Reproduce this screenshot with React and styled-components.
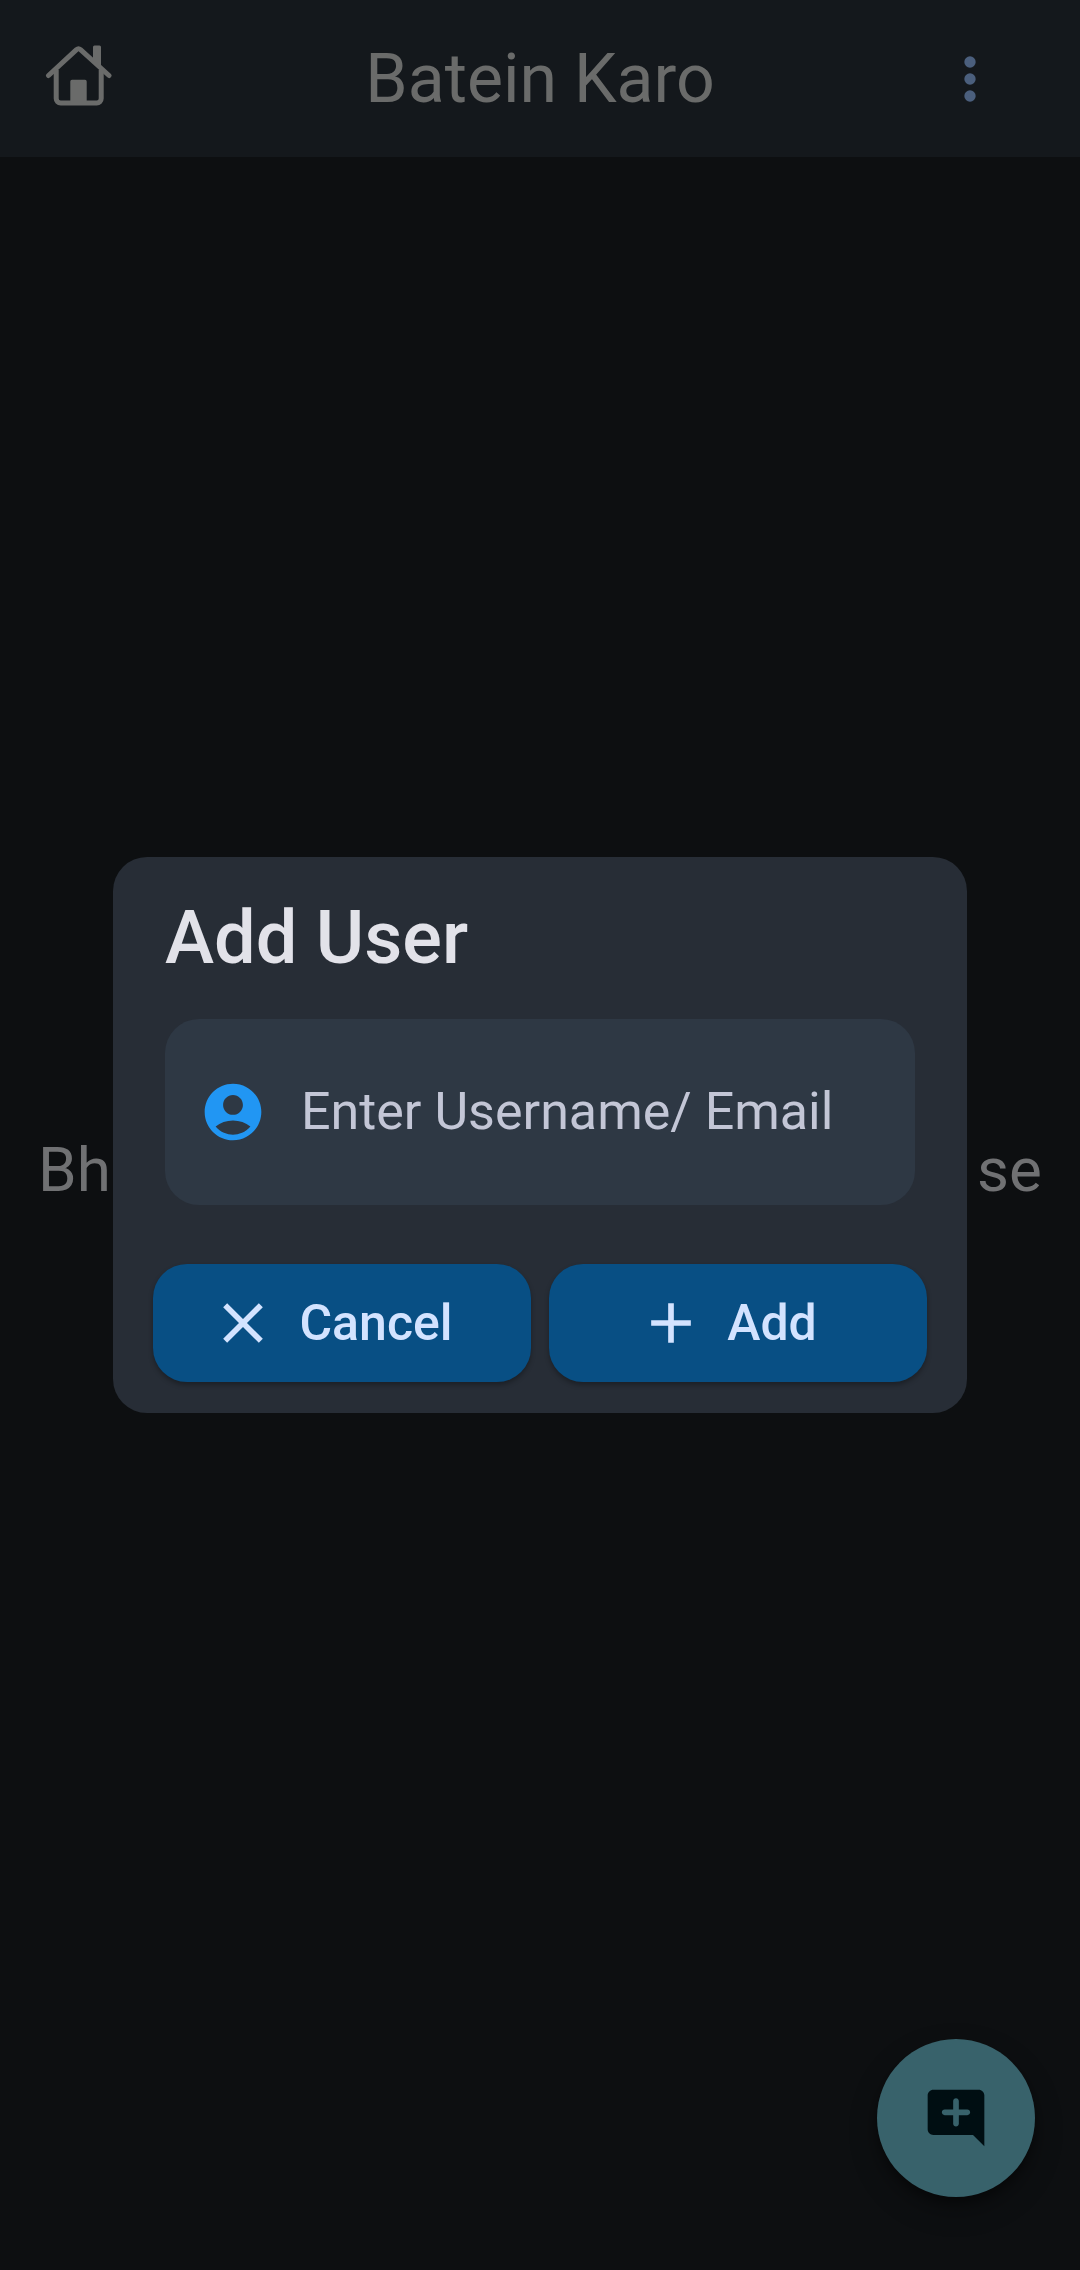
import React from "react";
import styled, { createGlobalStyle } from "styled-components";

const GlobalStyle = createGlobalStyle`
  *, *::before, *::after { box-sizing: border-box; }
  body { margin: 0; background: #0d0f11; font-family: Roboto, "Liberation Sans", sans-serif; }
  button, input { font: inherit; color: inherit; border: 0; margin: 0; }
  h1, h2, p { margin: 0; }
`;

const Screen = styled.div`
  min-height: 100vh;
  display: flex;
  flex-direction: column;
  background: #0d0f11;
`;

const AppBar = styled.header`
  height: 157px;
  padding: 0 76px 0 45px;
  display: grid;
  grid-template-columns: 99px 1fr 68px;
  align-items: center;
  background: #14181c;
  color: #6a6b6a;
`;

const AppTitle = styled.h1`
  font-size: 68px;
  line-height: 82px;
  font-weight: 400;
  text-align: center;
`;

const IconButton = styled.button`
  width: 68px;
  height: 68px;
  padding: 0;
  background: transparent;
  color: ${(p) => p.$color};
`;

const Icon = styled.svg`
  display: block;
  flex: none;
  width: 68px;
  height: 68px;
`;

const Content = styled.main`
  flex: 1;
  display: flex;
  align-items: center;
  padding: 0 38px 88px;
`;

const EmptyNote = styled.p`
  flex: 1;
  display: flex;
  justify-content: space-between;
  font-size: 62px;
  line-height: 88px;
  color: #707173;
`;

const Fab = styled.button`
  position: fixed;
  right: 45px;
  bottom: 73px;
  width: 158px;
  height: 158px;
  padding: 0;
  display: flex;
  align-items: center;
  justify-content: center;
  border-radius: 50%;
  background: #38626b;
  color: #000e12;
  box-shadow: 0 12px 28px rgba(0, 0, 0, 0.3), 0 6px 10px rgba(0, 0, 0, 0.3);
`;

const Overlay = styled.div`
  position: fixed;
  inset: 0;
  display: flex;
  align-items: center;
  justify-content: center;
  padding: 0 113px;
`;

const Dialog = styled.form`
  flex: 1;
  min-width: 0;
  padding: 36px 40px 31px;
  border-radius: 34px;
  background: #272d36;
`;

const DialogTitle = styled.h2`
  padding: 0 12px;
  font-size: 74px;
  line-height: 90px;
  font-weight: 500;
  color: #e2e2e9;
`;

const Field = styled.label`
  height: 186px;
  margin: 36px 12px 59px;
  padding: 0 34px;
  display: flex;
  align-items: center;
  gap: 34px;
  border-radius: 34px;
  background: #2e3844;
  color: #2196f3;
`;

const TextInput = styled.input`
  flex: 1;
  min-width: 0;
  padding: 0;
  background: transparent;
  outline: none;
  font-size: 52px;
  line-height: 60px;
  color: #e2e2e9;
  &::placeholder { color: #c3c6d6; opacity: 1; }
`;

const Actions = styled.div`
  display: grid;
  grid-template-columns: 1fr 1fr;
  gap: 18px;
`;

const ActionButton = styled.button`
  height: 118px;
  padding: 0 67px 0 45px;
  display: flex;
  align-items: center;
  justify-content: center;
  gap: 22px;
  border-radius: 34px;
  background: #084f84;
  color: #d3e3ff;
  font-size: 50px;
  line-height: 60px;
  font-weight: 500;
  box-shadow: 0 3px 5px rgba(0, 0, 0, 0.3);
`;

const HomeIcon = () => (
  <Icon viewBox="0 0 68 68" fill="none" stroke="currentColor" strokeWidth="5" strokeLinecap="round" strokeLinejoin="round" aria-hidden="true">
    <path d="M3.5 30.5 31.5 4.6Q33.5 2.9 35.5 4.6L64 30.5" />
    <path d="M11.2 25v28.5a4.5 4.5 0 0 0 4.5 4.5h36a4.5 4.5 0 0 0 4.5-4.5V25" strokeLinecap="butt" />
    <path d="M49.5 .4h5a1.5 1.5 0 0 1 1.5 1.5V23l-8-7V1.9A1.5 1.5 0 0 1 49.5 .4ZM27 34.7h13a1.7 1.7 0 0 1 1.7 1.7V58H25.3V36.4A1.7 1.7 0 0 1 27 34.7Z" fill="currentColor" stroke="none" />
  </Icon>
);

const MoreIcon = () => (
  <Icon viewBox="0 0 24 24" fill="currentColor" aria-hidden="true">
    <circle cx="12" cy="6" r="2" />
    <circle cx="12" cy="12" r="2" />
    <circle cx="12" cy="18" r="2" />
  </Icon>
);

const AccountIcon = () => (
  <Icon viewBox="0 0 24 24" fill="currentColor" aria-hidden="true">
    <path d="M12 2C6.48 2 2 6.48 2 12s4.48 10 10 10 10-4.48 10-10S17.52 2 12 2zm0 4c1.93 0 3.5 1.57 3.5 3.5S13.93 13 12 13s-3.5-1.57-3.5-3.5S10.07 6 12 6zm0 14c-2.03 0-4.43-.82-6.14-2.88C7.55 15.8 9.68 15 12 15s4.45.8 6.14 2.12C16.43 19.18 14.03 20 12 20z" />
  </Icon>
);

const CloseIcon = () => (
  <Icon viewBox="0 0 24 24" fill="currentColor" aria-hidden="true">
    <path d="M19 6.41 17.59 5 12 10.59 6.41 5 5 6.41 10.59 12 5 17.59 6.41 19 12 13.41 17.59 19 19 17.59 13.41 12z" />
  </Icon>
);

const AddIcon = () => (
  <Icon viewBox="0 0 24 24" fill="currentColor" aria-hidden="true">
    <path d="M19 13h-6v6h-2v-6H5v-2h6V5h2v6h6v2z" />
  </Icon>
);

const AddCommentIcon = () => (
  <Icon viewBox="0 0 24 24" fill="currentColor" aria-hidden="true">
    <path d="M22 4c0-1.1-.9-2-2-2H4c-1.1 0-2 .9-2 2v12c0 1.1.9 2 2 2h14l4 4V4zm-6 7h-3v3c0 .55-.45 1-1 1s-1-.45-1-1v-3H8c-.55 0-1-.45-1-1s.45-1 1-1h3V6c0-.55.45-1 1-1s1 .45 1 1v3h3c.55 0 1 .45 1 1s-.45 1-1 1z" />
  </Icon>
);

export default function App() {
  return (
    <>
      <GlobalStyle />
      <Screen>
        <AppBar>
          <IconButton type="button" aria-label="Home" $color="#6a6b6a"><HomeIcon /></IconButton>
          <AppTitle>Batein Karo</AppTitle>
          <IconButton type="button" aria-label="More options" $color="#4b5f7d"><MoreIcon /></IconButton>
        </AppBar>
        <Content>
          <EmptyNote><span>Bh</span><span>se</span></EmptyNote>
        </Content>
        <Fab type="button" aria-label="New chat"><AddCommentIcon /></Fab>
      </Screen>
      <Overlay>
        <Dialog role="dialog" aria-labelledby="add-user-title" onSubmit={(e) => e.preventDefault()}>
          <DialogTitle id="add-user-title">Add User</DialogTitle>
          <Field>
            <AccountIcon />
            <TextInput type="text" placeholder="Enter Username/ Email" aria-label="Enter Username/ Email" />
          </Field>
          <Actions>
            <ActionButton type="button"><CloseIcon />Cancel</ActionButton>
            <ActionButton type="submit"><AddIcon />Add</ActionButton>
          </Actions>
        </Dialog>
      </Overlay>
    </>
  );
}
